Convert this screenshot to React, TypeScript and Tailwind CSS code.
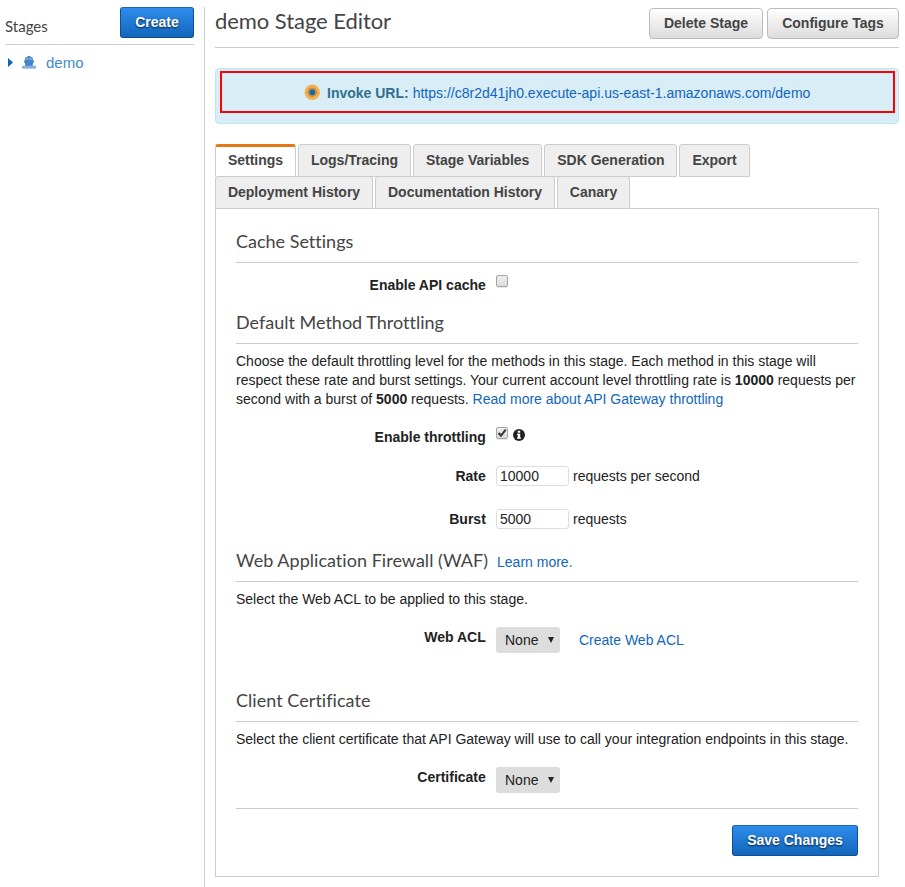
import React from "react";

const link = "text-[#1166bb]";

function Heading({ children }: { children: React.ReactNode }) {
  return (
    <div className="flex h-[33px] items-start border-b border-[#ccc]">
      <h3 className="-mt-px font-[Lato,sans-serif] text-[18px] leading-[24px] whitespace-nowrap text-[#444] [font-variant-ligatures:none]">{children}</h3>
    </div>
  );
}

function Label({ children }: { children: React.ReactNode }) {
  return <label className="mt-px w-[249.8px] text-right font-bold">{children}</label>;
}

function Tab({ children, active = false }: { children: React.ReactNode; active?: boolean }) {
  return (
    <button
      className={`h-[33px] shrink-0 rounded-t-[3px] border px-[11.92px] font-bold leading-[20px] whitespace-nowrap text-[#444] ${
        active ? "border-x-[#ccc] border-t-[3px] border-t-[#e47911] border-b-white bg-white pb-[4px]" : "border-[#ccc] bg-[#eee] pb-[2px]"
      }`}
    >
      {children}
    </button>
  );
}

function Checkbox({ checked = false }: { checked?: boolean }) {
  return (
    <span className="ml-[10.2px] flex h-[12px] w-[12px] items-center justify-center rounded-[2px] border border-[#a6a6a6] bg-linear-to-b from-[#eee] to-[#dcdcdc] shadow-[0_1px_1px_rgba(0,0,0,0.1)]">
      {checked && (
        <svg width="10" height="10" viewBox="0 0 10 10" className="shrink-0">
          <path d="M1.5 5 L4 7.6 L8.7 1.6" fill="none" stroke="#3c3c3c" strokeWidth="2.2" />
        </svg>
      )}
    </span>
  );
}

function NumberInput({ value }: { value: string }) {
  return <input className="ml-[10.2px] h-[20px] w-[73px] rounded-[3px] border border-[#ddd] px-[3px]" defaultValue={value} />;
}

function Select() {
  return (
    <button className="ml-[10.2px] flex h-[26px] w-[64px] items-center rounded-[3px] bg-[#ddd] pl-[9px]">
      <span>None</span>
      <svg width="6" height="6" viewBox="0 0 6 6" className="ml-[9.5px]">
        <path d="M0 0H6L3 6Z" fill="#222" />
      </svg>
    </button>
  );
}

const blue =
  "rounded-[3px] border border-[#0d4f94] border-t-[#1c66b5] bg-linear-to-b from-[#2e8ded] to-[#1166bb] font-bold text-white [text-shadow:0_1px_2px_rgba(0,0,0,0.75)]";
const gray =
  "h-[31px] rounded-[4px] border border-[#bbb] bg-linear-to-b from-white to-[#dcdcdc] font-bold text-[#444]";

export default function App() {
  return (
    <div className="flex h-[887px] w-[905px] overflow-hidden bg-white pt-[7px] font-['Liberation_Sans',Arial,sans-serif] text-[14px] leading-[19px] text-[#222]">
      <aside className="w-[205px] shrink-0 border-r border-[#ccc] pr-[10px] pl-[5px]">
        <div className="flex h-[38px] items-start justify-between border-b border-[#ccc]">
          <span className="pt-[9px] font-[Lato,sans-serif] text-[15px] leading-[20px] text-[#444]">Stages</span>
          <button className={`h-[31px] w-[74px] ${blue}`}>Create</button>
        </div>
        <div className="flex h-[35px] items-center pl-[3px] text-[15px] text-[#428bca]">
          <svg width="5" height="9" viewBox="0 0 5 9">
            <path d="M0 0L5 4.5L0 9Z" fill="#1166bb" />
          </svg>
          <svg width="14" height="13" viewBox="0 0 14 13" className="ml-[9px]" fill="#4585c8">
            <path d="M5.5 0H8.5V1.3H10.5L11 4.3L12.3 5L10.8 8V10H3.2V8L1.7 5L3 4.3L3.5 1.3H5.5Z" />
            <path d="M4.3 2.6H9.7V4.1L7 3.3L4.3 4.1Z" fill="#9dc0e4" />
            <path d="M0 10.3L1.8 9.4L3.5 10.3L5.3 9.4L7 10.3L8.7 9.4L10.5 10.3L12.2 9.4L14 10.3V12.6H0Z" fill="#6b9fd2" />
            <path d="M0 11.3L1.8 10.5L3.5 11.3L5.3 10.5L7 11.3L8.7 10.5L10.5 11.3L12.2 10.5L14 11.3" fill="none" stroke="#c5daee" strokeWidth=".6" />
          </svg>
          <span className="ml-[10px]">demo</span>
        </div>
      </aside>

      <main className="ml-[10px] w-[684px]">
        <header className="flex h-[41px] items-start border-b border-[#ccc]">
          <h1 className="grow font-[Lato,sans-serif] text-[22px] leading-[28px] tracking-[-0.06px] text-[#444]">demo Stage Editor</h1>
          <button className={`mt-[1px] w-[114px] ${gray}`}>Delete Stage</button>
          <button className={`mt-[1px] ml-[4px] w-[132px] ${gray}`}>Configure Tags</button>
        </header>

        <section className="mt-[20px] h-[56px] rounded-[4px] border border-[#bce8f1] bg-[#d9edf7] pt-[2px] pr-[3px] pl-[4px]">
          <div className="flex h-[42px] items-center border-2 border-[#fb0007] pl-[82px] whitespace-nowrap">
            <svg width="16" height="16" viewBox="0 0 16 16">
              <circle cx="8.3" cy="8.3" r="7.7" fill="#f5b04a" />
              <circle cx="8.3" cy="8.3" r="4.7" fill="#b98f50" />
              <circle cx="8.3" cy="8.3" r="2.8" fill="#1767ad" />
            </svg>
            <strong className="mt-[2px] ml-[7px] text-[#31708f]">Invoke URL:</strong>
            <a className={`mt-[2px] ml-[4px] ${link}`}>https://c8r2d41jh0.execute-api.us-east-1.amazonaws.com/demo</a>
          </div>
        </section>

        <nav className="mt-[20px]">
          <div className="flex h-[32px] gap-[2px]">
            <Tab active>Settings</Tab>
            <Tab>Logs/Tracing</Tab>
            <Tab>Stage Variables</Tab>
            <Tab>SDK Generation</Tab>
            <Tab>Export</Tab>
          </div>
          <div className="flex h-[32px] gap-[2px]">
            <Tab>Deployment History</Tab>
            <Tab>Documentation History</Tab>
            <Tab>Canary</Tab>
          </div>
        </nav>

        <section className="h-[669px] w-[664px] border border-[#ccc] px-[20px] pt-[21px]">
          <Heading>Cache Settings</Heading>
          <div className="flex h-[48px] items-start pt-[12px]">
            <Label>Enable API cache</Label>
            <Checkbox />
          </div>

          <Heading>Default Method Throttling</Heading>
          <p className="h-[83px] pt-[8px] whitespace-nowrap">
            Choose the default throttling level for the methods in this stage. Each method in this stage will<br />
            respect these rate and burst settings. Your current account level throttling rate is <b>10000</b> requests per<br />
            second with a burst of <b>5000</b> requests. <a className={link}>Read more about API Gateway throttling</a>
          </p>
          <div className="flex h-[39px] items-start">
            <Label>Enable throttling</Label>
            <Checkbox checked />
            <svg width="12" height="12" viewBox="0 0 12 12" className="mt-[2px] ml-[5px]">
              <circle cx="6" cy="6" r="6" fill="#222" />
              <path d="M4.8 1.8H7.2V3.7H4.8ZM4 4.7H7.2V8.5H8V9.8H4V8.5H4.8V6H4Z" fill="white" />
            </svg>
          </div>
          <div className="flex h-[43px] items-start">
            <Label>Rate</Label>
            <NumberInput value="10000" />
            <span className="mt-px ml-[4px]">requests per second</span>
          </div>
          <div className="flex h-[40px] items-start">
            <Label>Burst</Label>
            <NumberInput value="5000" />
            <span className="mt-px ml-[4px]">requests</span>
          </div>

          <Heading>
            <span className="tracking-[0.03px]">Web Application Firewall (WAF)</span>
            <a className={`ml-[9px] font-['Liberation_Sans',Arial,sans-serif] text-[14px] ${link}`}>Learn more.</a>
          </Heading>
          <p className="h-[45px] pt-[8px]">Select the Web ACL to be applied to this stage.</p>
          <div className="flex h-[62px] items-start">
            <Label>Web ACL</Label>
            <Select />
            <a className={`mt-[4px] ml-[19px] ${link}`}>Create Web ACL</a>
          </div>

          <Heading><span className="tracking-[0.04px]">Client Certificate</span></Heading>
          <p className="h-[45px] pt-[8px] whitespace-nowrap">
            Select the client certificate that API Gateway will use to call your integration endpoints in this stage.
          </p>
          <div className="flex h-[42px] items-start border-b border-[#ccc]">
            <Label>Certificate</Label>
            <Select />
          </div>
          <div className="flex justify-end pt-[16px]">
            <button className={`h-[31px] w-[126px] ${blue}`}>Save Changes</button>
          </div>
        </section>
      </main>
    </div>
  );
}
